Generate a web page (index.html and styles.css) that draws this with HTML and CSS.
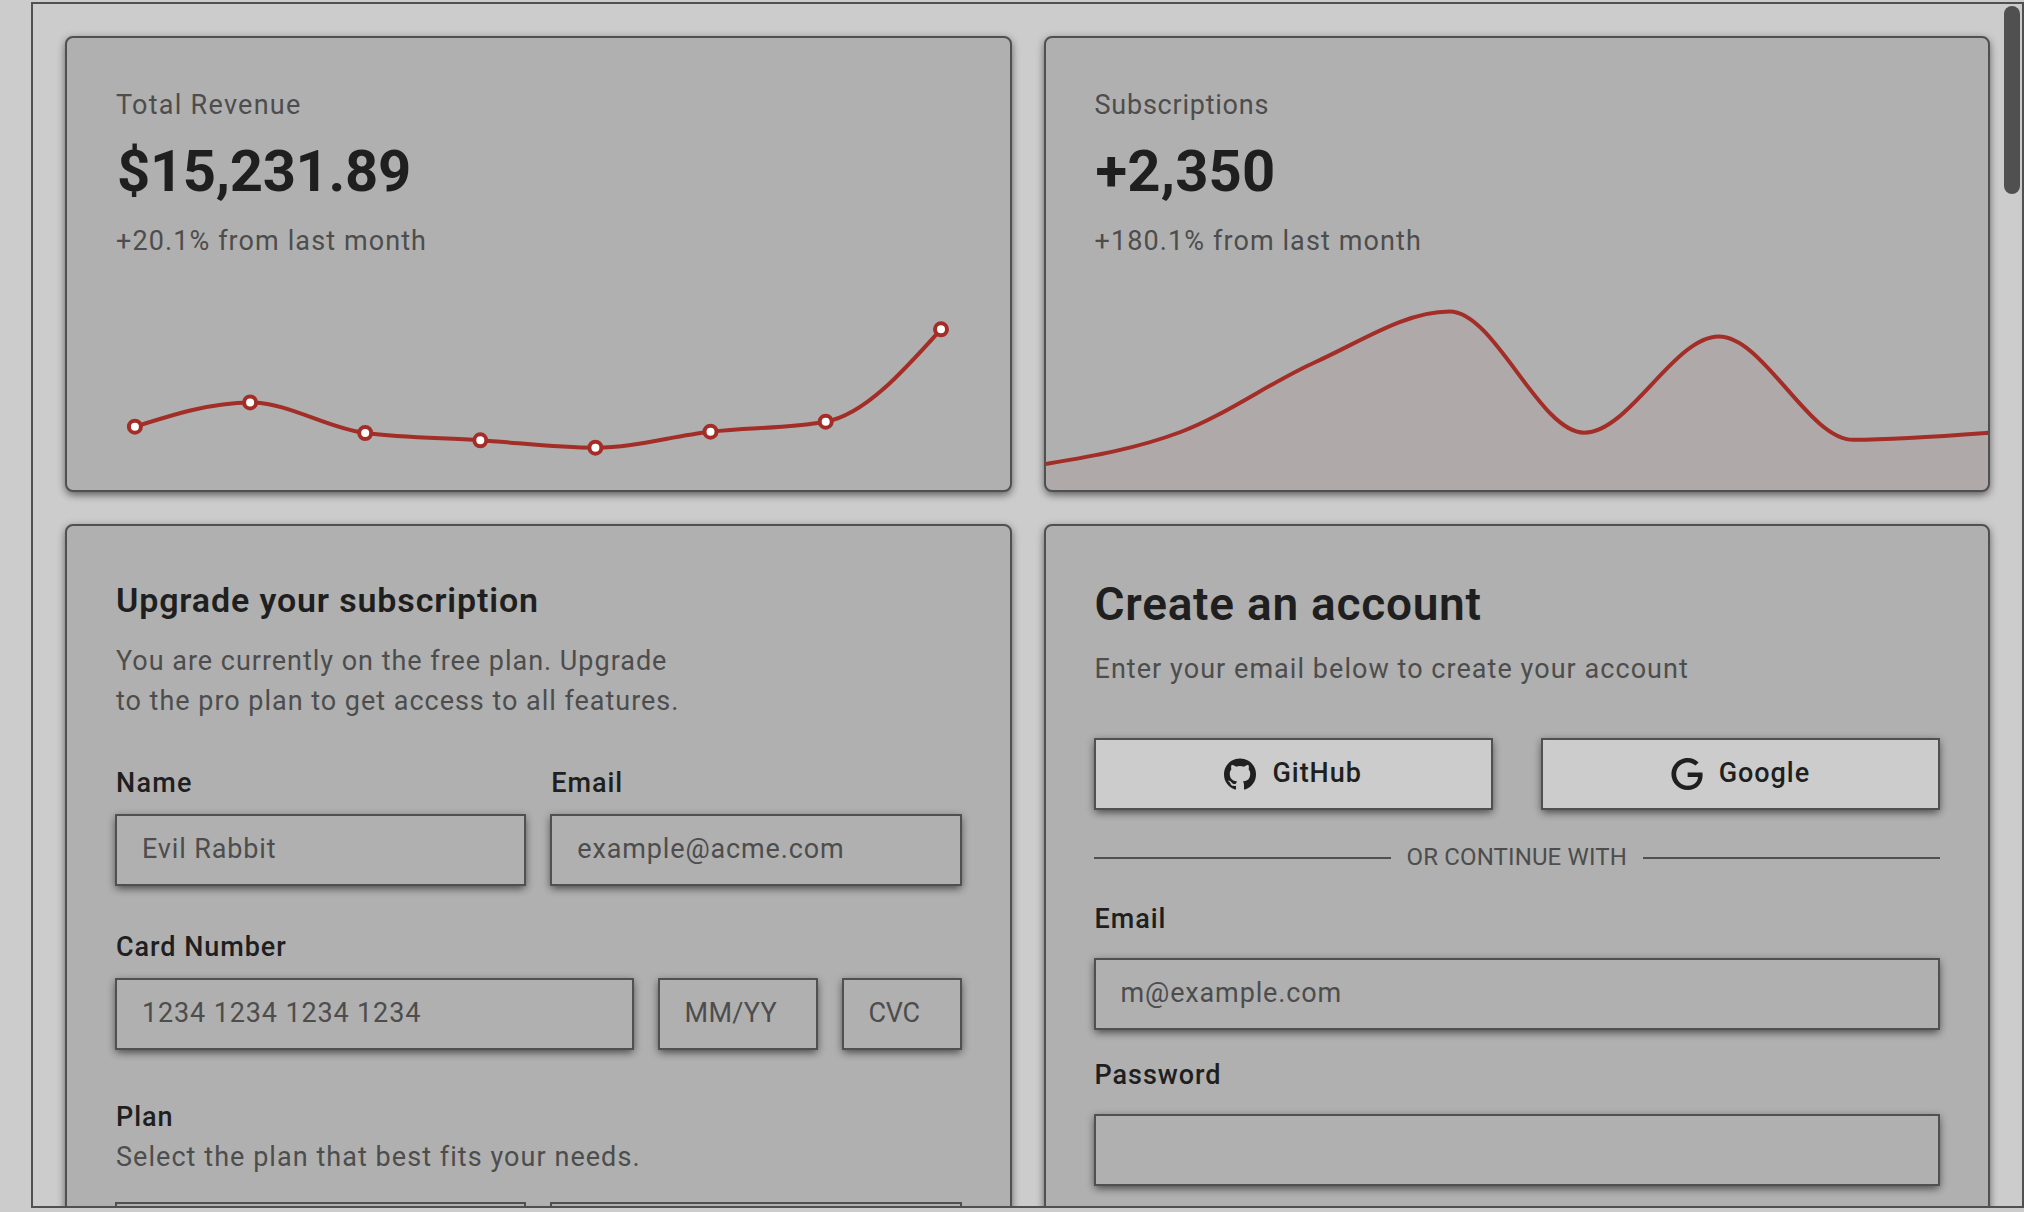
FILE: index.html
```html
<!DOCTYPE html>
<html lang="en">
<head>
<meta charset="utf-8">
<title>Cards</title>
<link rel="stylesheet" href="styles.css">
</head>
<body>
<main class="frame">
  <div class="grid">
    <section class="card stat">
      <p class="muted ls-wide">Total Revenue</p>
      <p class="figure">$15,231.89</p>
      <p class="muted stat-note">+20.1% from last month</p>
      <svg class="chart" viewBox="67 290 943 200" width="943" height="200" aria-hidden="true">
        <path class="line" d="M134.9 426.7C173.3 414.5 211.8 402.4 250.1 402.4C288.5 402.4 326.8 428.1 365.2 433C403.6 437.9 441.9 437.8 480.3 440.3C518.7 442.8 557 447.7 595.4 447.7C633.8 447.7 672.1 436 710.5 431.7C748.9 427.4 787.2 428.4 825.7 421.7C864.1 415 902.5 372.2 941 329.3"/>
        <g class="dots">
          <circle cx="134.9" cy="426.7" r="6"/>
          <circle cx="250.1" cy="402.4" r="6"/>
          <circle cx="365.2" cy="433" r="6"/>
          <circle cx="480.3" cy="440.3" r="6"/>
          <circle cx="595.4" cy="447.7" r="6"/>
          <circle cx="710.5" cy="431.7" r="6"/>
          <circle cx="825.7" cy="421.7" r="6"/>
          <circle cx="941" cy="329.3" r="6"/>
        </g>
      </svg>
    </section>

    <section class="card stat">
      <p class="muted ls-mid">Subscriptions</p>
      <p class="figure figure-short">+2,350</p>
      <p class="muted stat-note">+180.1% from last month</p>
      <svg class="chart" viewBox="1046 290 943 200" width="943" height="200" aria-hidden="true">
        <path class="area" d="M1046 464C1090.9 456.4 1135.7 448.9 1180.6 432C1225.5 415.1 1270.3 382.3 1315.1 362.2C1360 342.1 1404.8 311.5 1449.7 311.5C1494.6 311.5 1539.4 432.7 1584.3 432.7C1629.1 432.7 1674 336.5 1718.8 336.5C1763.7 336.5 1808.5 439.8 1853.4 439.8C1898.3 439.8 1943.1 436.3 1989 432.8V490H1046Z"/>
        <path class="line" d="M1046 464C1090.9 456.4 1135.7 448.9 1180.6 432C1225.5 415.1 1270.3 382.3 1315.1 362.2C1360 342.1 1404.8 311.5 1449.7 311.5C1494.6 311.5 1539.4 432.7 1584.3 432.7C1629.1 432.7 1674 336.5 1718.8 336.5C1763.7 336.5 1808.5 439.8 1853.4 439.8C1898.3 439.8 1943.1 436.3 1989 432.8"/>
      </svg>
    </section>

    <section class="card form">
      <h3 class="title">Upgrade your subscription</h3>
      <p class="muted desc ls-desc">You are currently on the free plan. Upgrade<br>to the pro plan to get access to all features.</p>
      <div class="pair">
        <div class="field">
          <label class="label ls-wide">Name</label>
          <div class="input ls-in">Evil Rabbit</div>
        </div>
        <div class="field">
          <label class="label">Email</label>
          <div class="input ls-in">example@acme.com</div>
        </div>
      </div>
      <div class="field card-number">
        <label class="label">Card Number</label>
        <div class="card-inputs">
          <div class="input ls-in">1234 1234 1234 1234</div>
          <div class="input ls-tight">MM/YY</div>
          <div class="input ls-neg">CVC</div>
        </div>
      </div>
      <div class="plan">
        <p class="label">Plan</p>
        <p class="muted ls-body">Select the plan that best fits your needs.</p>
        <div class="pair options">
          <div class="option"></div>
          <div class="option"></div>
        </div>
      </div>
    </section>

    <section class="card form">
      <h2 class="title title-lg">Create an account</h2>
      <p class="muted desc ls-body">Enter your email below to create your account</p>
      <div class="providers">
        <button class="button" type="button">
          <svg class="icon" viewBox="0 0 438.549 438.549" aria-hidden="true"><path d="M409.132 114.573c-19.608-33.596-46.205-60.194-79.798-79.8-33.598-19.607-70.277-29.408-110.063-29.408-39.781 0-76.472 9.804-110.063 29.408-33.596 19.605-60.192 46.204-79.8 79.8C9.803 148.168 0 184.854 0 224.63c0 47.78 13.94 90.745 41.827 128.906 27.884 38.164 63.906 64.572 108.063 79.227 5.14.954 8.945.283 11.419-1.996 2.475-2.282 3.711-5.14 3.711-8.562 0-.571-.049-5.708-.144-15.417a2549.81 2549.81 0 01-.144-25.406l-6.567 1.136c-4.187.767-9.469 1.092-15.846 1-6.374-.089-12.991-.757-19.842-1.999-6.854-1.231-13.229-4.086-19.13-8.559-5.898-4.473-10.085-10.328-12.56-17.556l-2.855-6.57c-1.903-4.374-4.899-9.233-8.992-14.559-4.093-5.331-8.232-8.945-12.419-10.848l-1.999-1.431c-1.332-.951-2.568-2.098-3.711-3.429-1.142-1.331-1.997-2.663-2.568-3.997-.572-1.335-.098-2.43 1.427-3.289 1.525-.859 4.281-1.276 8.28-1.276l5.708.853c3.807.763 8.516 3.042 14.133 6.851 5.614 3.806 10.229 8.754 13.846 14.842 4.38 7.806 9.657 13.754 15.846 17.847 6.184 4.093 12.419 6.136 18.699 6.136 6.28 0 11.704-.476 16.274-1.423 4.565-.952 8.848-2.383 12.847-4.285 1.713-12.758 6.377-22.559 13.988-29.41-10.848-1.14-20.601-2.857-29.264-5.14-8.658-2.286-17.605-5.996-26.835-11.14-9.235-5.137-16.896-11.516-22.985-19.126-6.09-7.614-11.088-17.61-14.987-29.979-3.901-12.374-5.852-26.648-5.852-42.826 0-23.035 7.52-42.637 22.557-58.817-7.044-17.318-6.379-36.732 1.997-58.24 5.52-1.715 13.706-.428 24.554 3.853 10.85 4.283 18.794 7.952 23.84 10.994 5.046 3.041 9.089 5.618 12.135 7.708 17.705-4.947 35.976-7.421 54.818-7.421s37.117 2.474 54.823 7.421l10.849-6.849c7.419-4.57 16.18-8.758 26.262-12.565 10.088-3.805 17.802-4.853 23.134-3.138 8.562 21.509 9.325 40.922 2.279 58.24 15.036 16.18 22.559 35.787 22.559 58.817 0 16.178-1.958 30.497-5.853 42.966-3.9 12.471-8.941 22.457-15.125 29.979-6.191 7.521-13.901 13.85-23.131 18.986-9.232 5.14-18.182 8.85-26.84 11.136-8.662 2.286-18.415 4.004-29.263 5.146 9.894 8.562 14.842 22.077 14.842 40.539v60.237c0 3.422 1.19 6.279 3.572 8.562 2.379 2.279 6.136 2.95 11.276 1.995 44.163-14.653 80.185-41.062 108.068-79.226 27.88-38.161 41.825-81.126 41.825-128.906-.01-39.771-9.818-76.454-29.414-110.049z"/></svg>
          <span>GitHub</span>
        </button>
        <button class="button" type="button">
          <svg class="icon" viewBox="0 0 24 24" aria-hidden="true"><path d="M12.48 10.92v3.28h7.84c-.24 1.84-.853 3.187-1.787 4.133-1.147 1.147-2.933 2.4-6.053 2.4-4.827 0-8.6-3.893-8.6-8.72s3.773-8.72 8.6-8.72c2.6 0 4.507 1.027 5.907 2.347l2.307-2.307C18.747 1.44 16.133 0 12.48 0 5.867 0 .307 5.387.307 12s5.56 12 12.173 12c3.573 0 6.267-1.173 8.373-3.36 2.16-2.16 2.84-5.213 2.84-7.667 0-.76-.053-1.467-.173-2.053H12.48z"/></svg>
          <span>Google</span>
        </button>
      </div>
      <div class="divider"><span>OR CONTINUE WITH</span></div>
      <div class="field tall email">
        <label class="label">Email</label>
        <div class="input ls-in">m@example.com</div>
      </div>
      <div class="field tall password">
        <label class="label">Password</label>
        <div class="input"></div>
      </div>
    </section>
  </div>
  <div class="scrollbar"></div>
</main>
</body>
</html>
```

FILE: styles.css
```css
:root {
  --bg: #cccccc;
  --card: #b0b0b0;
  --border: #505050;
  --text: #1f1f1f;
  --muted: #4d4d4d;
  --red: #a32d27;
  --shadow: 0 2px 8px rgba(0, 0, 0, .3), 0 4px 8px -2px rgba(0, 0, 0, .4);
}

* { box-sizing: border-box; }

body {
  margin: 0;
  height: 1212px;
  padding: 2px 0 4px 31px;
  overflow: hidden;
  background: var(--bg);
  color: var(--text);
  font: 400 27px/40px Roboto, "Open Sans", sans-serif;
  letter-spacing: 1.1px;
}

p, h2, h3 { margin: 0; }

.frame {
  position: relative;
  height: 1206px;
  border: 2px solid var(--border);
  overflow: hidden;
}

.grid {
  display: grid;
  grid-template-columns: 1fr 1fr;
  grid-template-rows: 456px 760px;
  gap: 32px;
  padding: 32px;
}

.card {
  display: flex;
  flex-direction: column;
  min-width: 0;
  background: var(--card);
  border: 2px solid var(--border);
  border-radius: 8px;
  box-shadow: var(--shadow);
}

.stat { overflow: hidden; padding-top: 47px; }
.stat p { padding-left: 49px; }
.stat .figure { padding-left: 50px; }
.form { padding: 54px 48px 0; }

.muted { color: var(--muted); }

.figure {
  margin-top: 16px;
  font-size: 58px;
  font-weight: 700;
  line-height: 60px;
  letter-spacing: -.34px;
}
.figure-short { letter-spacing: .16px; }
.stat-note { margin-top: 20px; }

.chart { display: block; flex: none; margin-top: auto; }
.line { fill: none; stroke: var(--red); stroke-width: 4; }
.area { fill: var(--red); fill-opacity: .05; }
.dots { fill: #fff; stroke: var(--red); stroke-width: 4; }

.title {
  padding-left: 1px;
  font-size: 34px;
  font-weight: 600;
  line-height: 40px;
  letter-spacing: .85px;
}
.title-lg { font-size: 46px; line-height: 48px; letter-spacing: .74px; }
.desc { margin-top: 21px; padding-left: 1px; }

.pair {
  display: grid;
  grid-template-columns: 1fr 1fr;
  gap: 24px;
  margin-top: 42px;
}

.field { display: flex; flex-direction: column; gap: 11px; }
.tall { gap: 19px; }
.label {
  display: block;
  padding-left: 1px;
  font-weight: 500;
  letter-spacing: .95px;
}

.input {
  height: 72px;
  padding: 0 0 2px 25px;
  border: 2px solid var(--border);
  color: var(--muted);
  line-height: 66px;
  white-space: nowrap;
  box-shadow: var(--shadow);
}

.card-number { margin-top: 41px; }
.card-inputs {
  display: grid;
  grid-template-columns: 1fr 160px 120px;
  gap: 24px;
}

.plan { margin-top: 47px; }
.plan .muted { padding-left: 1px; }
.options { margin-top: 25px; }
.option { height: 72px; border: 2px solid var(--border); }

.providers {
  display: grid;
  grid-template-columns: 1fr 1fr;
  gap: 48px;
  margin-top: 49px;
}
.button {
  display: flex;
  align-items: center;
  justify-content: center;
  gap: 16px;
  height: 72px;
  padding: 0;
  border: 2px solid var(--border);
  background: var(--bg);
  color: var(--text);
  font: inherit;
  font-weight: 500;
  line-height: 66px;
  letter-spacing: .95px;
  box-shadow: var(--shadow);
}
.button span { padding-bottom: 2px; }
.icon { width: 32px; height: 32px; fill: currentColor; }

.divider {
  display: flex;
  align-items: center;
  gap: 16px;
  margin-top: 31px;
  color: var(--muted);
  font-size: 24px;
  line-height: 32px;
  letter-spacing: .13px;
}
.divider::before,
.divider::after {
  content: "";
  flex: 1;
  height: 2px;
  margin-top: 2px;
  background: var(--border);
}

.email { margin-top: 26px; }
.password { margin-top: 25px; }

.scrollbar {
  position: absolute;
  top: 2px;
  right: 2px;
  width: 16px;
  height: 188px;
  border-radius: 8px;
  background: var(--border);
}

.ls-wide { letter-spacing: 1.27px; }
.ls-mid { letter-spacing: .77px; }
.ls-desc { letter-spacing: .98px; }
.ls-body { letter-spacing: 1.05px; }
.ls-in { letter-spacing: .86px; }
.ls-tight { letter-spacing: .32px; }
.ls-neg { letter-spacing: -.3px; }
```
